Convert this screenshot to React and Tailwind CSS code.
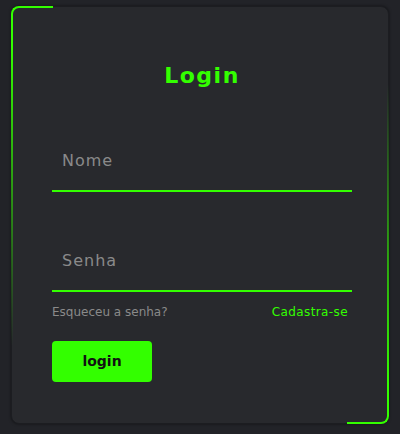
import React from "react";

const font = { fontFamily: '"DejaVu Sans", "Open Sans", sans-serif' };

export default function App() {
  return (
    <div className="min-h-[434px] bg-[#222328] pt-[6px] pl-[11px]" style={font}>
      <div className="relative w-[378px] h-[418px] rounded-lg bg-[#28292d] border border-[#1c1d21] shadow-[0_0_3px_rgba(0,0,0,0.5)]">
        {/* green corner accents */}
        <div className="absolute -top-px -left-px w-[42px] h-[40px] rounded-tl-lg border-t-2 border-l-2 border-[#33ff00]" />
        <div className="absolute top-[39px] -left-px w-[2px] h-[300px] bg-gradient-to-b from-[#33ff00] to-transparent" />
        <div className="absolute -bottom-px -right-px w-[42px] h-[40px] rounded-br-lg border-b-2 border-r-2 border-[#33ff00]" />
        <div className="absolute bottom-[39px] -right-px w-[2px] h-[300px] bg-gradient-to-t from-[#33ff00] to-transparent" />

        <div className="flex flex-col pt-[54px] pl-[40px]">
          <h1 className="w-[300px] text-center text-[22px] leading-[30px] font-semibold tracking-[1.5px] text-[#33ff00]">
            Login
          </h1>

          <input
            type="text"
            placeholder="Nome"
            className="mt-[39px] w-[300px] h-[62px] px-[10px] bg-transparent border-b-2 border-[#33ff00] text-[16px] tracking-[1px] text-[#ccc] placeholder:text-[#8a8a8a] outline-none"
          />
          <input
            type="password"
            placeholder="Senha"
            className="mt-[38px] w-[300px] h-[62px] px-[10px] bg-transparent border-b-2 border-[#33ff00] text-[16px] tracking-[1px] text-[#ccc] placeholder:text-[#8a8a8a] outline-none"
          />

          <div className="mt-[11px] w-[296px] flex justify-between text-[12px] leading-[18px]">
            <a className="text-[#8a8a8a]">Esqueceu a senha?</a>
            <a className="text-[#33ff00] tracking-[0.4px]">Cadastra-se</a>
          </div>

          <button className="mt-[20px] w-[100px] h-[41px] rounded-[4px] bg-[#33ff00] text-[14px] font-semibold text-[#111]">
            login
          </button>
        </div>
      </div>
    </div>
  );
}
